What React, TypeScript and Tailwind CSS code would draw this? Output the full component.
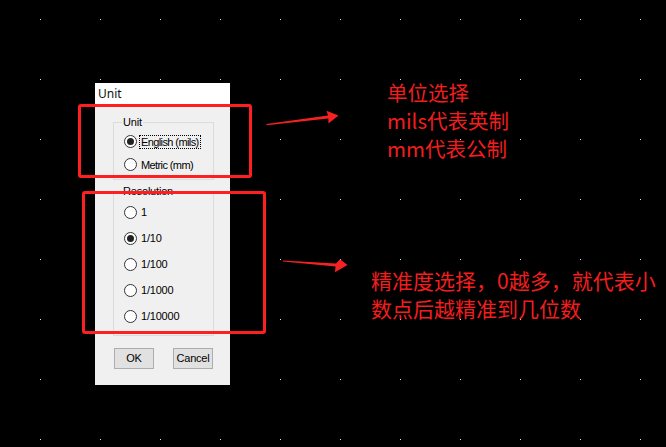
import React from "react";

const ui = { fontFamily: '"Liberation Sans", Arial, sans-serif' };
const cjk = { fontFamily: '"Noto Sans CJK SC", "Noto Sans", sans-serif' };

function Radio({ checked }: { checked?: boolean }) {
  return (
    <span className="flex h-[13px] w-[13px] shrink-0 items-center justify-center rounded-full border border-[#333] bg-white">
      {checked && <span className="h-[7px] w-[7px] rounded-full bg-[#222]" />}
    </span>
  );
}

function Option({
  label,
  checked,
  focused,
  rowClass,
}: {
  label: string;
  checked?: boolean;
  focused?: boolean;
  rowClass: string;
}) {
  return (
    <div className={`flex items-center pl-[10px] ${rowClass}`}>
      <Radio checked={checked} />
      <span
        className={`ml-[2px] border px-[1px] leading-[12px] ${
          focused ? "border-dotted border-black" : "border-transparent"
        }`}
      >
        {label}
      </span>
    </div>
  );
}

function GroupBox({
  title,
  className,
  children,
}: {
  title: string;
  className: string;
  children: React.ReactNode;
}) {
  return (
    <div className={`relative w-[101px] border border-[#dcdcdc] ${className}`}>
      <span className="absolute left-[8px] top-[-7px] bg-[#f0f0f0] px-[1px] leading-[12px]">
        {title}
      </span>
      {children}
    </div>
  );
}

export default function App() {
  return (
    <div className="relative h-[447px] w-[666px] overflow-hidden bg-black bg-[radial-gradient(circle_at_40.5px_19.5px,#e4e4e4_0.6px,transparent_1px)] bg-size-[60px_60px]">
      {/* dialog */}
      <div
        className="absolute left-[95px] top-[83px] flex h-[302px] w-[135px] flex-col bg-[#f0f0f0] text-[11px] tracking-[-0.2px] text-black"
        style={ui}
      >
        <div
          className="flex h-[21px] items-center bg-white pl-[3px] pt-[1px] text-[12px] tracking-normal text-[#111]"
          style={{ fontFamily: '"Noto Sans", sans-serif' }}
        >
          Unit
        </div>
        <div className="flex flex-1 flex-col pl-[18px]">
          <GroupBox title="Unit" className="mt-[18px] h-[58px] pt-[7px]">
            <Option label="English (mils)" checked focused rowClass="h-[23px] tracking-[-0.6px]" />
            <Option label="Metric (mm)" rowClass="h-[23px] tracking-[-0.6px]" />
          </GroupBox>
          <GroupBox title="Resolution" className="mt-[11px] h-[145px] pt-[7px]">
            <Option label="1" rowClass="h-[26px]" />
            <Option label="1/10" checked rowClass="h-[26px]" />
            <Option label="1/100" rowClass="h-[26px]" />
            <Option label="1/1000" rowClass="h-[26px]" />
            <Option label="1/10000" rowClass="h-[26px]" />
          </GroupBox>
          <div className="ml-[1px] mt-[12px] flex w-[99px] justify-between">
            <button className="h-[21px] w-[40px] border border-[#adadad] bg-[#e1e1e1] leading-none">
              OK
            </button>
            <button className="h-[21px] w-[40px] border border-[#adadad] bg-[#e1e1e1] leading-none">
              Cancel
            </button>
          </div>
        </div>
      </div>

      {/* annotation boxes */}
      <div className="absolute left-[78px] top-[104px] h-[74px] w-[174px] rounded-[3px] border-[3px] border-[#fe2020]" />
      <div className="absolute left-[82px] top-[191px] h-[143px] w-[184px] rounded-[3px] border-[3px] border-[#fe2020]" />

      {/* arrows */}
      <svg className="absolute left-[260px] top-[105px]" width="85" height="25" viewBox="260 105 85 25">
        <polygon
          fill="#f42222"
          points="266.5,124 328,115.6 326.5,110.8 338.5,115.6 328.5,123.4 328.3,118.4 266.5,125.2"
        />
      </svg>
      <svg className="absolute left-[278px] top-[254px]" width="75" height="22" viewBox="278 254 75 22">
        <polygon
          fill="#f42222"
          points="283,260.4 336,263.4 340,259.3 347.5,265 335,272.3 335.5,266.6 283,261.6"
        />
      </svg>

      {/* annotation texts */}
      <div
        className="absolute left-[387px] top-[78px] text-[20.5px] leading-[28px] text-[#f21e1e]"
        style={cjk}
      >
        <div>单位选择</div>
        <div>mils代表英制</div>
        <div>mm代表公制</div>
      </div>
      <div
        className="absolute left-[371px] top-[266px] text-[21px] leading-[28px] text-[#f21e1e]"
        style={cjk}
      >
        <div>精准度选择，0越多，就代表小</div>
        <div>数点后越精准到几位数</div>
      </div>
    </div>
  );
}
